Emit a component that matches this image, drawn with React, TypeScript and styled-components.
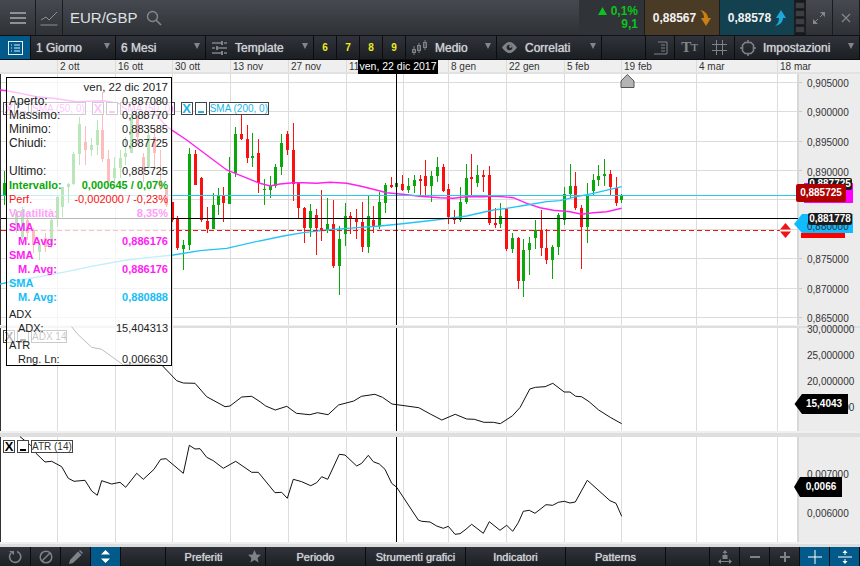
import styled, { createGlobalStyle } from "styled-components";

type Candle = [number, number, number, number, number, number];

const GlobalStyle = createGlobalStyle`
  html, body {
    margin: 0;
    padding: 0;
    overflow: hidden;
    background: #2b2e33;
    font-family: "Liberation Sans", Arial, sans-serif;
  }
`;

const TICKS = [57, 115, 172, 230, 288, 346, 403, 448, 506, 564, 621, 696, 777];
const DATES = ["", "2 ott", "16 ott", "30 ott", "13 nov", "27 nov", "11 dic", "", "8 gen", "22 gen", "5 feb", "19 feb", "4 mar", "18 mar"];

// left part, read at 3x from (0,70)
const CANDLES_LEFT: Candle[] = [
  [12, 303, 405, 340, 375, 1],
  [48, 420, 490, 430, 470, 1],
  [65, 410, 510, 420, 500, 1],
  [82, 440, 510, 450, 490, 0],
  [100, 475, 550, 480, 525, 0],
  [117, 510, 570, 525, 545, 1],
  [135, 490, 545, 505, 530, 0],
  [152, 445, 535, 450, 525, 1],
  [170, 375, 470, 380, 445, 1],
  [187, 350, 440, 350, 410, 1],
  [205, 340, 400, 342, 352, 1],
  [220, 245, 345, 252, 342, 1],
  [238, 140, 285, 162, 252, 1],
  [256, 168, 285, 216, 240, 0],
  [274, 205, 258, 225, 240, 1],
  [292, 150, 255, 180, 225, 1],
  [307, 65, 275, 180, 268, 0],
  [325, 240, 335, 268, 335, 0],
  [343, 262, 345, 295, 325, 1],
  [361, 240, 325, 265, 295, 1],
  [376, 200, 285, 250, 262, 1],
  [394, 130, 250, 140, 250, 1],
  [412, 125, 225, 140, 200, 0],
  [430, 250, 335, 260, 295, 0],
  [445, 175, 295, 195, 295, 1],
  [463, 170, 300, 200, 250, 0],
  [481, 240, 360, 330, 355, 0],
  [499, 350, 410, 355, 405, 0],
  [517, 395, 455, 395, 450, 0],
  [532, 438, 540, 445, 535, 0],
  [550, 510, 600, 525, 538, 1],
  [568, 235, 540, 252, 525, 1],
  [586, 240, 345, 252, 345, 0],
  [603, 320, 455, 323, 450, 0],
  [620, 410, 490, 453, 478, 0],
  [638, 370, 478, 405, 478, 1],
  [655, 355, 435, 378, 405, 1],
  [670, 350, 455, 378, 400, 0],
  [688, 260, 402, 308, 402, 1],
  [706, 170, 320, 192, 308, 1],
  [724, 135, 210, 192, 207, 0],
  [742, 165, 280, 207, 265, 0],
  [757, 190, 290, 258, 262, 1],
  [775, 208, 370, 250, 340, 0],
];

// rest of the candles, read at 3x from (260,100)
const CANDLES_RIGHT: Candle[] = [
  [13, 237, 315, 266, 270, 1],
  [31, 228, 293, 258, 270, 1],
  [46, 192, 264, 201, 258, 1],
  [64, 102, 225, 129, 201, 1],
  [82, 93, 165, 102, 150, 0],
  [100, 69, 303, 150, 252, 0],
  [115, 252, 354, 250, 324, 0],
  [133, 321, 429, 324, 384, 0],
  [151, 312, 411, 333, 384, 1],
  [169, 327, 465, 345, 384, 0],
  [184, 270, 423, 384, 390, 0],
  [202, 294, 399, 372, 390, 1],
  [220, 300, 504, 372, 498, 0],
  [238, 378, 585, 417, 498, 1],
  [256, 309, 438, 348, 402, 1],
  [271, 336, 402, 348, 354, 0],
  [289, 327, 417, 354, 366, 0],
  [307, 306, 456, 366, 441, 0],
  [325, 288, 459, 348, 441, 1],
  [340, 318, 399, 360, 378, 0],
  [358, 276, 387, 306, 378, 1],
  [376, 249, 339, 255, 309, 1],
  [394, 231, 264, 255, 261, 0],
  [409, 234, 273, 249, 261, 1],
  [427, 225, 273, 252, 270, 0],
  [445, 234, 279, 258, 270, 1],
  [463, 225, 279, 240, 258, 1],
  [481, 225, 285, 237, 243, 0],
  [496, 180, 285, 228, 258, 0],
  [514, 213, 306, 228, 258, 1],
  [532, 171, 246, 201, 228, 1],
  [550, 192, 276, 201, 273, 0],
  [565, 252, 372, 267, 351, 0],
  [583, 330, 372, 354, 360, 0],
  [601, 261, 366, 306, 360, 1],
  [619, 192, 312, 234, 306, 1],
  [634, 162, 288, 231, 234, 0],
  [652, 195, 261, 225, 249, 1],
  [670, 210, 276, 225, 228, 0],
  [688, 198, 375, 225, 369, 0],
  [706, 324, 384, 369, 372, 0],
  [721, 309, 384, 348, 372, 1],
  [739, 324, 453, 327, 447, 0],
  [757, 399, 459, 414, 447, 1],
  [775, 411, 567, 414, 543, 0],
  [790, 417, 591, 450, 543, 1],
  [808, 411, 525, 429, 450, 1],
  [826, 360, 447, 390, 414, 1],
  [844, 330, 468, 390, 444, 0],
  [859, 387, 492, 444, 480, 0],
  [877, 435, 537, 441, 480, 1],
  [895, 339, 465, 345, 441, 1],
  [913, 261, 375, 282, 360, 1],
  [931, 192, 294, 258, 282, 1],
  [946, 216, 330, 258, 324, 0],
  [964, 315, 507, 324, 381, 0],
  [982, 249, 429, 288, 381, 1],
  [1000, 222, 285, 240, 273, 1],
  [1015, 195, 258, 228, 240, 1],
  [1033, 177, 258, 222, 228, 1],
  [1051, 210, 288, 222, 261, 0],
  [1069, 231, 318, 264, 309, 0],
  [1084, 282, 309, 288, 300, 1],
];

const toCandle = (ox: number, oy: number) => (c: Candle): Candle => [
  Math.round(ox + c[0] / 3),
  oy + c[1] / 3,
  oy + c[2] / 3,
  oy + c[3] / 3,
  oy + c[4] / 3,
  c[5],
];

const CANDLES = [...CANDLES_LEFT.map(toCandle(0, 70)), ...CANDLES_RIGHT.map(toCandle(260, 100))];

const pts = (ox: number, oy: number, sx: number, sy: number, list: number[][]) =>
  list.map((p) => `${(ox + p[0] / sx).toFixed(1)},${(oy + p[1] / sy).toFixed(1)}`).join(" ");

const SMA_50 =
  pts(0, 70, 3, 3, [[0, 60], [20, 62], [60, 70], [110, 80], [160, 85], [230, 95], [310, 92], [380, 105], [470, 135], [500, 170], [560, 210], [620, 255], [680, 300], [730, 320], [780, 340]]) +
  " " +
  pts(260, 100, 3, 3, [[0, 250], [30, 258], [60, 252], [100, 248], [130, 248], [170, 250], [210, 247], [260, 250], [300, 258], [340, 268], [380, 278], [420, 282], [480, 289], [540, 293], [580, 295], [620, 290], [670, 290], [700, 288], [760, 293], [800, 310], [840, 323], [880, 331], [930, 335], [965, 343], [1000, 338], [1040, 335], [1085, 325]]);

const SMA_200 =
  pts(0, 220, 3, 3, [[0, 192], [60, 180], [120, 170], [200, 155], [270, 140], [380, 120], [450, 112], [520, 105], [600, 92], [680, 85], [780, 62]]) +
  " " +
  pts(260, 100, 3, 3, [[0, 423], [70, 408], [130, 398], [200, 390], [300, 382], [360, 378], [420, 372], [500, 363], [560, 356], [620, 348], [700, 330], [740, 325], [800, 315], [860, 305], [900, 302], [950, 290], [1000, 280], [1085, 260]]);

const ADX_LINE =
  pts(60, 320, 3, 3, [[35, 20], [50, 40], [95, 82], [125, 88], [190, 135], [210, 132], [305, 135], [350, 182], [370, 189], [405, 190], [440, 230], [495, 260], [510, 258], [545, 231], [575, 229], [600, 245]]) +
  " " +
  pts(260, 320, 2.613, 3, [[15, 258], [40, 270], [70, 259], [95, 280], [130, 284], [150, 278], [178, 284], [205, 255], [245, 243], [265, 229], [300, 223], [320, 232], [345, 252], [415, 263], [445, 282], [475, 300], [510, 283], [540, 297], [560, 298], [585, 307], [610, 307], [628, 311], [660, 287], [680, 262], [705, 207], [720, 202], [745, 200], [765, 190], [795, 216], [810, 216], [825, 229], [840, 230], [860, 245], [885, 270], [915, 292], [945, 311]]);

const ATR_LINE =
  pts(0, 430, 3, 3, [[60, 20], [92, 46], [108, 70], [135, 96], [155, 94], [185, 110], [205, 145], [222, 154], [255, 151], [275, 183], [292, 196], [305, 152], [335, 162], [360, 157], [377, 172], [410, 130], [430, 148], [462, 118], [482, 88], [498, 86], [550, 130], [568, 46], [585, 57], [600, 56], [620, 82], [640, 92], [670, 115], [707, 94], [755, 127], [775, 127], [825, 188], [845, 187], [862, 205], [880, 148], [905, 155], [932, 167], [950, 158], [965, 140], [983, 148], [1018, 73], [1035, 75], [1070, 108], [1085, 100], [1105, 76], [1120, 95], [1138, 102], [1155, 118], [1175, 160], [1190, 172], [1255, 270], [1265, 274]]) +
  " " +
  pts(430, 430, 3, 3, [[0, 276], [20, 288], [40, 295], [55, 289], [75, 313], [90, 311], [105, 300], [125, 283], [160, 310], [178, 275], [210, 301], [230, 286], [248, 304], [265, 278], [280, 244], [298, 241], [315, 250], [348, 224], [368, 226], [385, 217], [403, 214], [420, 219], [436, 216], [472, 151], [540, 212], [558, 220], [575, 259]]);

const MAIN_AXIS: [string, number][] = [
  ["0,905000", 83],
  ["0,900000", 112],
  ["0,895000", 142],
  ["0,890000", 172],
  ["0,875000", 259],
  ["0,870000", 289],
  ["0,865000", 318],
];
const ADX_AXIS: [string, number][] = [
  ["30,000000", 329],
  ["25,000000", 355],
  ["20,000000", 381],
  ["15,000000", 407],
];
const ATR_AXIS: [string, number][] = [
  ["0,007000", 474],
  ["0,006000", 513],
];

const Page = styled.div`
  position: relative;
  width: 860px;
  height: 566px;
  overflow: hidden;
  background: #fff;
`;

const TopBar = styled.div`
  display: flex;
  height: 36px;
  box-sizing: border-box;
  border-bottom: 1px solid #101215;
  background: linear-gradient(#46494f, #2e3136);
`;

const TopCell = styled.div<{ $w: number; $bg?: string }>`
  display: flex;
  align-items: center;
  justify-content: center;
  width: ${(p) => p.$w}px;
  box-sizing: border-box;
  border-right: 1px solid #1a1c20;
  background: ${(p) => p.$bg || "transparent"};
`;

const Symbol = styled.div`
  display: flex;
  flex: 1;
  align-items: center;
  gap: 8px;
  padding-left: 7px;
  font-size: 15px;
  color: #dfe1e3;
`;

const Change = styled(TopCell)`
  flex-direction: column;
  align-items: flex-end;
  padding-right: 6px;
  background: #303338;
  font-size: 12px;
  font-weight: bold;
  line-height: 13px;
  color: #0cc21c;
`;

const ChangeTop = styled.div`
  display: flex;
  align-items: center;
  gap: 4px;
`;

const Quote = styled(TopCell)`
  gap: 4px;
  font-size: 12px;
  font-weight: bold;
  color: #f2f2f2;
`;

const Signal = styled.div`
  display: flex;
  flex-direction: column;
  gap: 1px;
  width: 11px;
  padding: 2px 0;
  box-sizing: border-box;
  background: #17191c;
  border-right: 1px solid #1a1c20;
`;

const SignalDot = styled.div`
  flex: 1;
  background: #3b3e42;
  border: 1px solid #1f2124;
`;

const ToolBar = styled.div`
  display: flex;
  height: 24px;
  box-sizing: border-box;
  border-bottom: 1px solid #0d0e10;
  background: linear-gradient(#30343a, #1b1e23);
`;

const ToolCell = styled.div<{ $w: number; $active?: boolean }>`
  display: flex;
  align-items: center;
  justify-content: center;
  width: ${(p) => p.$w}px;
  box-sizing: border-box;
  border-right: 1px solid #0b0c0e;
  background: ${(p) => (p.$active ? "#025a8a" : "transparent")};
`;

const MenuCell = styled(ToolCell)<{ $gap?: number }>`
  position: relative;
  justify-content: flex-start;
  gap: ${(p) => p.$gap ?? 4}px;
  padding-left: 5px;
  font-size: 12px;
  color: #cdd1d4;
  text-shadow: 0 0 1px #cdd1d4;
`;

const Caret = styled.span`
  position: absolute;
  right: 5px;
  top: 7px;
  width: 0;
  height: 0;
  border-left: 3.5px solid transparent;
  border-right: 3.5px solid transparent;
  border-top: 6px solid #83878c;
`;

const Preset = styled(ToolCell)`
  font-size: 10px;
  font-weight: bold;
  color: #eded1e;
`;

const TypeGlyph = styled.span`
  font-family: "Liberation Serif", serif;
  font-weight: bold;
  font-size: 15px;
  color: #82868a;
`;

const TypeGlyphSmall = styled(TypeGlyph)`
  font-size: 10px;
`;

const DateAxis = styled.div`
  position: relative;
  display: flex;
  height: 14px;
  box-sizing: border-box;
  border-bottom: 2px solid #e2e2e2;
  background: #efefef;
  font-size: 10px;
  line-height: 14px;
  color: #333;
`;

const DateCell = styled.div<{ $w: number }>`
  width: ${(p) => p.$w}px;
  flex: none;
  box-sizing: border-box;
  padding-left: 2px;
  border-right: 1px solid #dcdcdc;
  white-space: nowrap;
`;

const DateTip = styled.div`
  position: absolute;
  left: 358px;
  top: 0;
  width: 80px;
  height: 14px;
  background: #000;
  color: #fff;
  font-size: 10.5px;
  line-height: 13px;
  text-align: center;
  white-space: nowrap;
`;

const Workspace = styled.div`
  position: relative;
  height: 473px;
`;

const PaneSvg = styled.svg`
  display: block;
  overflow: visible;
`;

const Sep = styled.div<{ $h: number }>`
  height: ${(p) => p.$h}px;
  background: linear-gradient(#efefef 40%, #dedede 40%);
`;

const AxisText = styled.text`
  font-size: 10px;
  fill: #333;
  dominant-baseline: middle;
`;

const TagText = styled.text`
  font-size: 10px;
  font-weight: bold;
  fill: #fff;
  text-anchor: middle;
  dominant-baseline: middle;
`;

const Legend = styled.div<{ $top: number }>`
  position: absolute;
  left: 3px;
  top: ${(p) => p.$top}px;
  display: flex;
`;

const LegendSet = styled.div`
  display: flex;
  gap: 2px;
  margin-right: 6px;
`;

const Chip = styled.div<{ $c: string }>`
  display: flex;
  align-items: center;
  justify-content: center;
  height: 11px;
  border: 1px solid #444;
  background: #fff;
  color: ${(p) => p.$c};
  font-size: 10px;
  line-height: 11px;
  white-space: nowrap;
`;

const CloseChip = styled(Chip)`
  width: 10px;
  font-size: 13px;
  font-weight: bold;
`;

const MinChip = styled(Chip)`
  position: relative;
  width: 10px;

  &::after {
    content: "";
    position: absolute;
    left: 2px;
    right: 2px;
    bottom: 1px;
    height: 2px;
    background: ${(p) => p.$c};
  }
`;

const Info = styled.div`
  position: absolute;
  left: 6px;
  top: 3px;
  width: 166px;
  height: 289px;
  box-sizing: border-box;
  padding: 2px 3px 0 2px;
  border: 1.5px solid #000;
  background: rgba(255, 255, 255, 0.72);
  font-size: 11px;
  line-height: 14px;
  color: #222;
`;

const InfoRow = styled.div<{ $c?: string; $bold?: boolean; $indent?: boolean; $gap?: number }>`
  display: flex;
  justify-content: space-between;
  height: 14px;
  margin-top: ${(p) => p.$gap || 0}px;
  padding-left: ${(p) => (p.$indent ? 9 : 0)}px;
  color: ${(p) => p.$c || "#222"};
  font-weight: ${(p) => (p.$bold ? "bold" : "normal")};
  white-space: nowrap;
`;

const InfoDate = styled(InfoRow)`
  justify-content: flex-end;
  font-size: 11.5px;
`;

const BigLabel = styled.span`
  font-size: 12px;
`;

const BottomBar = styled.div`
  display: flex;
  height: 19px;
  background: linear-gradient(#31353b, #1c1f24);
  font-size: 11px;
  color: #d0d3d6;
  text-shadow: 0 0 1px #d0d3d6;
`;

const BottomCell = styled.div<{ $w: number; $active?: boolean; $pad?: number }>`
  display: flex;
  align-items: center;
  justify-content: center;
  position: relative;
  width: ${(p) => p.$w}px;
  box-sizing: border-box;
  padding-right: ${(p) => p.$pad || 0}px;
  border-right: 1px solid #0b0c0e;
  background: ${(p) => (p.$active ? "#025a8a" : "transparent")};
`;

const StarSlot = styled.span`
  position: absolute;
  right: 4px;
  top: 3px;
  display: flex;
`;

function Icon({ w, h, children }: { w: number; h: number; children: React.ReactNode }) {
  return (
    <svg width={w} height={h} viewBox={`0 0 ${w} ${h}`} fill="none">
      {children}
    </svg>
  );
}

function CandleBars() {
  return (
    <g shapeRendering="crispEdges">
      {CANDLES.map((c, i) => {
        const color = c[5] ? "#0aa80a" : "#fb0f0f";
        return (
          <g key={i} fill={color}>
            <rect x={c[0]} y={c[1]} width={1} height={c[2] - c[1]} />
            <rect x={c[0] - 1} y={c[3]} width={3} height={Math.max(c[4] - c[3], 1.5)} />
          </g>
        );
      })}
    </g>
  );
}

function Pane({ top, height, hLines, axis, children }: {
  top: number;
  height: number;
  hLines: number[];
  axis: [string, number][];
  children: React.ReactNode;
}) {
  return (
    <PaneSvg width={860} height={height} viewBox={`0 ${top} 860 ${height}`}>
      <rect x={0} y={top} width={860} height={height} fill="#fff" />
      <g shapeRendering="crispEdges">
        {hLines.map((y) => (
          <rect key={y} x={0} y={y} width={797} height={1} fill="#dcdcdc" />
        ))}
        {TICKS.map((x) => (
          <rect key={x} x={x} y={top} width={1} height={height} fill="#dcdcdc" />
        ))}
        <rect x={0} y={top} width={1} height={height} fill="#333" />
        <rect x={797} y={top} width={63} height={height} fill="#ececec" />
        <rect x={797} y={top} width={2} height={height} fill="#d8d8d8" />
        {hLines.map((y) => (
          <rect key={y} x={799} y={y} width={3} height={1} fill="#c8c8c8" />
        ))}
      </g>
      {axis.map(([t, y]) => (
        <AxisText key={t} x={807} y={y + 1}>
          {t}
        </AxisText>
      ))}
      {children}
      <rect x={396} y={top} width={1} height={height} fill="#000" shapeRendering="crispEdges" />
    </PaneSvg>
  );
}

function MainPane() {
  return (
    <Pane top={74} height={251} hLines={[82, 111, 141, 170, 199, 229, 258, 288, 317]} axis={MAIN_AXIS}>
      <CandleBars />
      <polyline points={SMA_50} stroke="#ff22ee" strokeWidth={1.4} fill="none" />
      <polyline points={SMA_200} stroke="#22c4f5" strokeWidth={1.3} fill="none" />
      <rect x={1} y={195} width={795} height={1} fill="#2cc8ea" shapeRendering="crispEdges" />
      <rect x={1} y={218} width={797} height={1} fill="#000" shapeRendering="crispEdges" />
      <line x1={1} y1={230.5} x2={780} y2={230.5} stroke="#f01414" strokeDasharray="5 3" />
      <polygon points="627.3,74.5 634,81 634,87.5 621,87.5 621,81" fill="#b4b4b4" stroke="#555" />

      <polygon points="785.5,223 791,229.5 780,229.5" fill="#f01414" />
      <polygon points="785.5,238 791,231.5 780,231.5" fill="#f01414" />

      <rect x={804} y={183} width={49} height={20} fill="#ff00ff" />
      <rect x={808} y={178} width={44} height={12} rx={2} fill="#1b1b1b" />
      <TagText x={830} y={184.5}>0,887725</TagText>
      <rect x={796} y={184} width={50} height={18} rx={2} fill="#b00000" />
      <TagText x={821} y={193.5}>0,885725</TagText>

      <rect x={801} y={233} width={44} height={5} fill="#ff0000" />
      <polygon points="794,224 802,214 853,214 853,233 802,233" fill="#12baff" />
      <AxisText x={807} y={227}>0,880000</AxisText>
      <rect x={808} y={213} width={44} height={12} rx={2} fill="#1b1b1b" />
      <TagText x={830} y={219.5}>0,881778</TagText>
    </Pane>
  );
}

function AdxPane() {
  return (
    <Pane top={328} height={103} hLines={[]} axis={ADX_AXIS}>
      <polyline points={ADX_LINE} stroke="#111" strokeWidth={1} fill="none" />
      <polygon points="794.5,404 802,394 848,394 848,414 802,414" fill="#000" />
      <TagText x={824} y={404.5}>15,4043</TagText>
    </Pane>
  );
}

function AtrPane() {
  return (
    <Pane top={437} height={105} hLines={[]} axis={ATR_AXIS}>
      <polyline points={ATR_LINE} stroke="#111" strokeWidth={1} fill="none" />
      <polygon points="794,487 800,477 842,477 842,497 800,497" fill="#000" />
      <TagText x={821} y={487.5}>0,0066</TagText>
    </Pane>
  );
}

function LegendItem({ label, color, glyph }: { label: string; color: string; glyph?: string }) {
  return (
    <LegendSet>
      <CloseChip $c={glyph || color}>X</CloseChip>
      <MinChip $c={glyph || color} />
      <Chip $c={color}>{label}</Chip>
    </LegendSet>
  );
}

export default function App() {
  return (
    <Page>
      <GlobalStyle />
      <TopBar>
        <TopCell $w={36}>
          <Icon w={18} h={14}>
            <path d="M1 2h16M1 7h16M1 12h16" stroke="#8d9094" strokeWidth={2} />
          </Icon>
        </TopCell>
        <TopCell $w={27}>
          <Icon w={18} h={16}>
            <path d="M1 10l5-3 3 3 8-8M0.5 15h17" stroke="#8d9094" strokeWidth={1} />
          </Icon>
        </TopCell>
        <Symbol>
          EUR/GBP
          <Icon w={16} h={16}>
            <circle cx={6.5} cy={6.5} r={5} stroke="#85898d" strokeWidth={1.4} />
            <path d="M10 10l5 5" stroke="#85898d" strokeWidth={1.6} />
          </Icon>
        </Symbol>
        <Change $w={66}>
          <ChangeTop>
            <Icon w={9} h={8}>
              <path d="M4.5 0L9 8H0z" fill="#0cc21c" />
            </Icon>
            0,1%
          </ChangeTop>
          <span>9,1</span>
        </Change>
        <Quote $w={75} $bg="#4a3b26">
          0,88567
          <Icon w={11} h={16}>
            <path d="M0 0c5 1 8 4 8 8h3l-5 8-5-8h3c0-3-1-6-4-8z" fill="#c97f12" />
          </Icon>
        </Quote>
        <Quote $w={75} $bg="#13414f">
          0,88578
          <Icon w={11} h={16}>
            <path d="M0 16c5-1 8-4 8-8h3L6 0 1 8h3c0 3-1 6-4 8z" fill="#1ea7d8" />
          </Icon>
        </Quote>
        <Signal>
          <SignalDot />
          <SignalDot />
          <SignalDot />
          <SignalDot />
        </Signal>
        <TopCell $w={27}>
          <Icon w={14} h={14}>
            <path d="M8 1h5v5zM1 13V8l5 5z" fill="#83878b" />
            <path d="M11 3L8 6M3 11l3-3" stroke="#83878b" />
          </Icon>
        </TopCell>
        <TopCell $w={27}>
          <Icon w={10} h={10}>
            <path d="M1 1l8 8M9 1l-8 8" stroke="#83878b" strokeWidth={1.3} />
          </Icon>
        </TopCell>
      </TopBar>

      <ToolBar>
        <ToolCell $w={31} $active>
          <Icon w={15} h={14}>
            <rect x={0.5} y={0.5} width={14} height={13} stroke="#e6f0f6" />
            <path d="M3 4h1M6 4h6M3 7h1M6 7h6M3 10h1M6 10h6" stroke="#e6f0f6" />
          </Icon>
        </ToolCell>
        <MenuCell $w={85}>
          1 Giorno
          <Caret />
        </MenuCell>
        <MenuCell $w={90}>
          6 Mesi
          <Caret />
        </MenuCell>
        <MenuCell $w={108} $gap={7}>
          <Icon w={17} h={14}>
            <path d="M1 2h9M13 2h3M1 7h3M7 7h9M1 12h9M13 12h3" stroke="#7f8387" strokeWidth={1.4} />
            <path d="M10 0v4h2V0zM5 5v4h2V5zM10 10v4h2v-4z" fill="#7f8387" />
          </Icon>
          Template
          <Caret />
        </MenuCell>
        <Preset $w={23}>6</Preset>
        <Preset $w={23}>7</Preset>
        <Preset $w={23}>8</Preset>
        <Preset $w={23}>9</Preset>
        <MenuCell $w={91} $gap={7}>
          <Icon w={17} h={15}>
            <path d="M3 6v9M8 3v10M14 0v10" stroke="#7f8387" />
            <rect x={1.5} y={9.5} width={3} height={3} stroke="#7f8387" />
            <rect x={6.5} y={5.5} width={3} height={5} stroke="#7f8387" />
            <rect x={12.5} y={2.5} width={3} height={5} stroke="#7f8387" />
          </Icon>
          Medio
          <Caret />
        </MenuCell>
        <MenuCell $w={105} $gap={8}>
          <Icon w={15} h={11}>
            <path d="M0 5.5c3-4 5-5.500 7.500-5.500S12 1.500 15 5.500c-3 4-5 5.500-7.500 5.500S3 9.500 0 5.500z" fill="#7f8387" />
            <circle cx={7.5} cy={5.5} r={2.8} fill="#23262b" />
            <circle cx={8.5} cy={4.5} r={1.4} fill="#7f8387" />
          </Icon>
          Correlati
          <Caret />
        </MenuCell>
        <ToolCell $w={44} />
        <ToolCell $w={29}>
          <Icon w={15} h={14}>
            <path d="M5 1h9v12H1M8 4h4M8 7h4M8 10h4" stroke="#7f8387" />
          </Icon>
        </ToolCell>
        <ToolCell $w={30}>
          <TypeGlyph>T</TypeGlyph>
          <TypeGlyphSmall>T</TypeGlyphSmall>
        </ToolCell>
        <ToolCell $w={30}>
          <Icon w={15} h={15}>
            <path d="M4.5 0v15M10.5 0v15M0 4.5h15M0 10.5h15" stroke="#7f8387" />
          </Icon>
        </ToolCell>
        <MenuCell $w={125} $gap={7}>
          <Icon w={16} h={16}>
            <path d="M5 2.5h6l2.500 2.500v6L11 13.500H5L2.500 11V5z" stroke="#7f8387" strokeWidth={1.6} />
            <path d="M8 0v2M8 14v2M0 8h2.500M13.500 8H16" stroke="#7f8387" strokeWidth={1.6} />
          </Icon>
          Impostazioni
          <Caret />
        </MenuCell>
      </ToolBar>

      <DateAxis>
        {DATES.map((d, i) => (
          <DateCell key={i} $w={(TICKS[i] ?? 860) - (TICKS[i - 1] ?? -1)}>
            {d}
          </DateCell>
        ))}
        <DateTip>ven, 22 dic 2017</DateTip>
      </DateAxis>

      <Workspace>
        <MainPane />
        <Sep $h={3} />
        <AdxPane />
        <Sep $h={6} />
        <AtrPane />
        <Sep $h={5} />

        <Legend $top={28}>
          <LegendItem label="SMA (50, 0)" color="#f53cf0" />
          <LegendItem label="SMA (50, 0)" color="#f53cf0" />
          <LegendItem label="SMA (200, 0)" color="#1eb4e8" />
        </Legend>
        <Legend $top={256}>
          <LegendItem label="ADX 14" color="#333" glyph="#000" />
        </Legend>
        <Legend $top={366}>
          <LegendItem label="ATR (14)" color="#333" glyph="#000" />
        </Legend>

        <Info>
          <InfoDate>ven, 22 dic 2017</InfoDate>
          <InfoRow><BigLabel>Aperto:</BigLabel><span>0,887080</span></InfoRow>
          <InfoRow><BigLabel>Massimo:</BigLabel><span>0,888770</span></InfoRow>
          <InfoRow><BigLabel>Minimo:</BigLabel><span>0,883585</span></InfoRow>
          <InfoRow><BigLabel>Chiudi:</BigLabel><span>0,887725</span></InfoRow>
          <InfoRow />
          <InfoRow><BigLabel>Ultimo:</BigLabel><span>0,885725</span></InfoRow>
          <InfoRow $c="#0aa80a" $bold><span>Intervallo:</span><span>0,000645 / 0,07%</span></InfoRow>
          <InfoRow $c="#fb1414"><span>Perf.</span><span>-0,002000 / -0,23%</span></InfoRow>
          <InfoRow $c="#ff9dfa" $bold><span>Volatilità:</span><span>8,35%</span></InfoRow>
          <InfoRow $c="#ff1cf5" $bold><span>SMA</span></InfoRow>
          <InfoRow $c="#ff1cf5" $bold $indent><span>M. Avg:</span><span>0,886176</span></InfoRow>
          <InfoRow $c="#ff1cf5" $bold><span>SMA</span></InfoRow>
          <InfoRow $c="#ff1cf5" $bold $indent><span>M. Avg:</span><span>0,886176</span></InfoRow>
          <InfoRow $c="#18bcf5" $bold><span>SMA</span></InfoRow>
          <InfoRow $c="#18bcf5" $bold $indent><span>M. Avg:</span><span>0,880888</span></InfoRow>
          <InfoRow $gap={3}><span>ADX</span></InfoRow>
          <InfoRow $indent><span>ADX:</span><span>15,404313</span></InfoRow>
          <InfoRow $gap={3}><span>ATR</span></InfoRow>
          <InfoRow $indent><span>Rng. Ln:</span><span>0,006630</span></InfoRow>
        </Info>
      </Workspace>

      <BottomBar>
        <BottomCell $w={31}>
          <Icon w={14} h={14}>
            <path d="M3 3a5.600 5.600 0 1 0 6-1.500" stroke="#7f8387" strokeWidth={1.6} />
            <path d="M1 1h5v4z" fill="#7f8387" />
          </Icon>
        </BottomCell>
        <BottomCell $w={30}>
          <Icon w={14} h={14}>
            <circle cx={7} cy={7} r={5.8} stroke="#7f8387" strokeWidth={1.5} />
            <path d="M3 11l8-8" stroke="#7f8387" strokeWidth={1.5} />
          </Icon>
        </BottomCell>
        <BottomCell $w={30}>
          <Icon w={14} h={14}>
            <path d="M0 14l1-4 8-8.500 3.500 3.500L4 13z" fill="#7f8387" />
            <path d="M10 1l1-1 3 3-1 1z" fill="#7f8387" />
          </Icon>
        </BottomCell>
        <BottomCell $w={30} $active>
          <Icon w={11} h={13}>
            <path d="M5.500 0L10 4.500H1z" fill="#fff" />
            <path d="M5.500 13L10 8.500H1z" fill="#fff" />
          </Icon>
        </BottomCell>
        <BottomCell $w={45} />
        <BottomCell $w={100} $pad={24}>
          Preferiti
          <StarSlot>
            <Icon w={13} h={13}>
              <path d="M6.500 0l1.900 4.400 4.600.4-3.500 3.100 1.100 4.600-4.100-2.500-4.100 2.500 1.100-4.600L0 4.800l4.600-.4z" fill="#7f8387" />
            </Icon>
          </StarSlot>
        </BottomCell>
        <BottomCell $w={100}>Periodo</BottomCell>
        <BottomCell $w={100}>Strumenti grafici</BottomCell>
        <BottomCell $w={100}>Indicatori</BottomCell>
        <BottomCell $w={100}>Patterns</BottomCell>
        <BottomCell $w={44} />
        <BottomCell $w={30}>
          <Icon w={14} h={14}>
            <path d="M7 0l2.500 3h-2v3h-1V3h-2z" fill="#7f8387" />
            <rect x={4.5} y={5} width={5} height={4} fill="#7f8387" />
            <path d="M0 11.500l3-2.500v2h8V9l3 2.500L11 14v-2H3v2z" fill="#7f8387" />
          </Icon>
        </BottomCell>
        <BottomCell $w={30}>
          <Icon w={10} h={4}>
            <rect width={10} height={2} y={1} fill="#7f8387" />
          </Icon>
        </BottomCell>
        <BottomCell $w={30}>
          <Icon w={10} h={10}>
            <path d="M0 4h10v2H0zM4 0h2v10H4z" fill="#7f8387" />
          </Icon>
        </BottomCell>
        <BottomCell $w={30} $active>
          <Icon w={14} h={14}>
            <path d="M7 0v14M0 7h14" stroke="#fff" />
          </Icon>
        </BottomCell>
        <BottomCell $w={30} $active>
          <Icon w={14} h={14}>
            <path d="M0 7h14" stroke="#fff" />
            <path d="M7 0l2.500 3h-2v2h-1V3h-2zM7 14l2.500-3h-2V9h-1v2h-2z" fill="#fff" />
          </Icon>
        </BottomCell>
      </BottomBar>
    </Page>
  );
}
